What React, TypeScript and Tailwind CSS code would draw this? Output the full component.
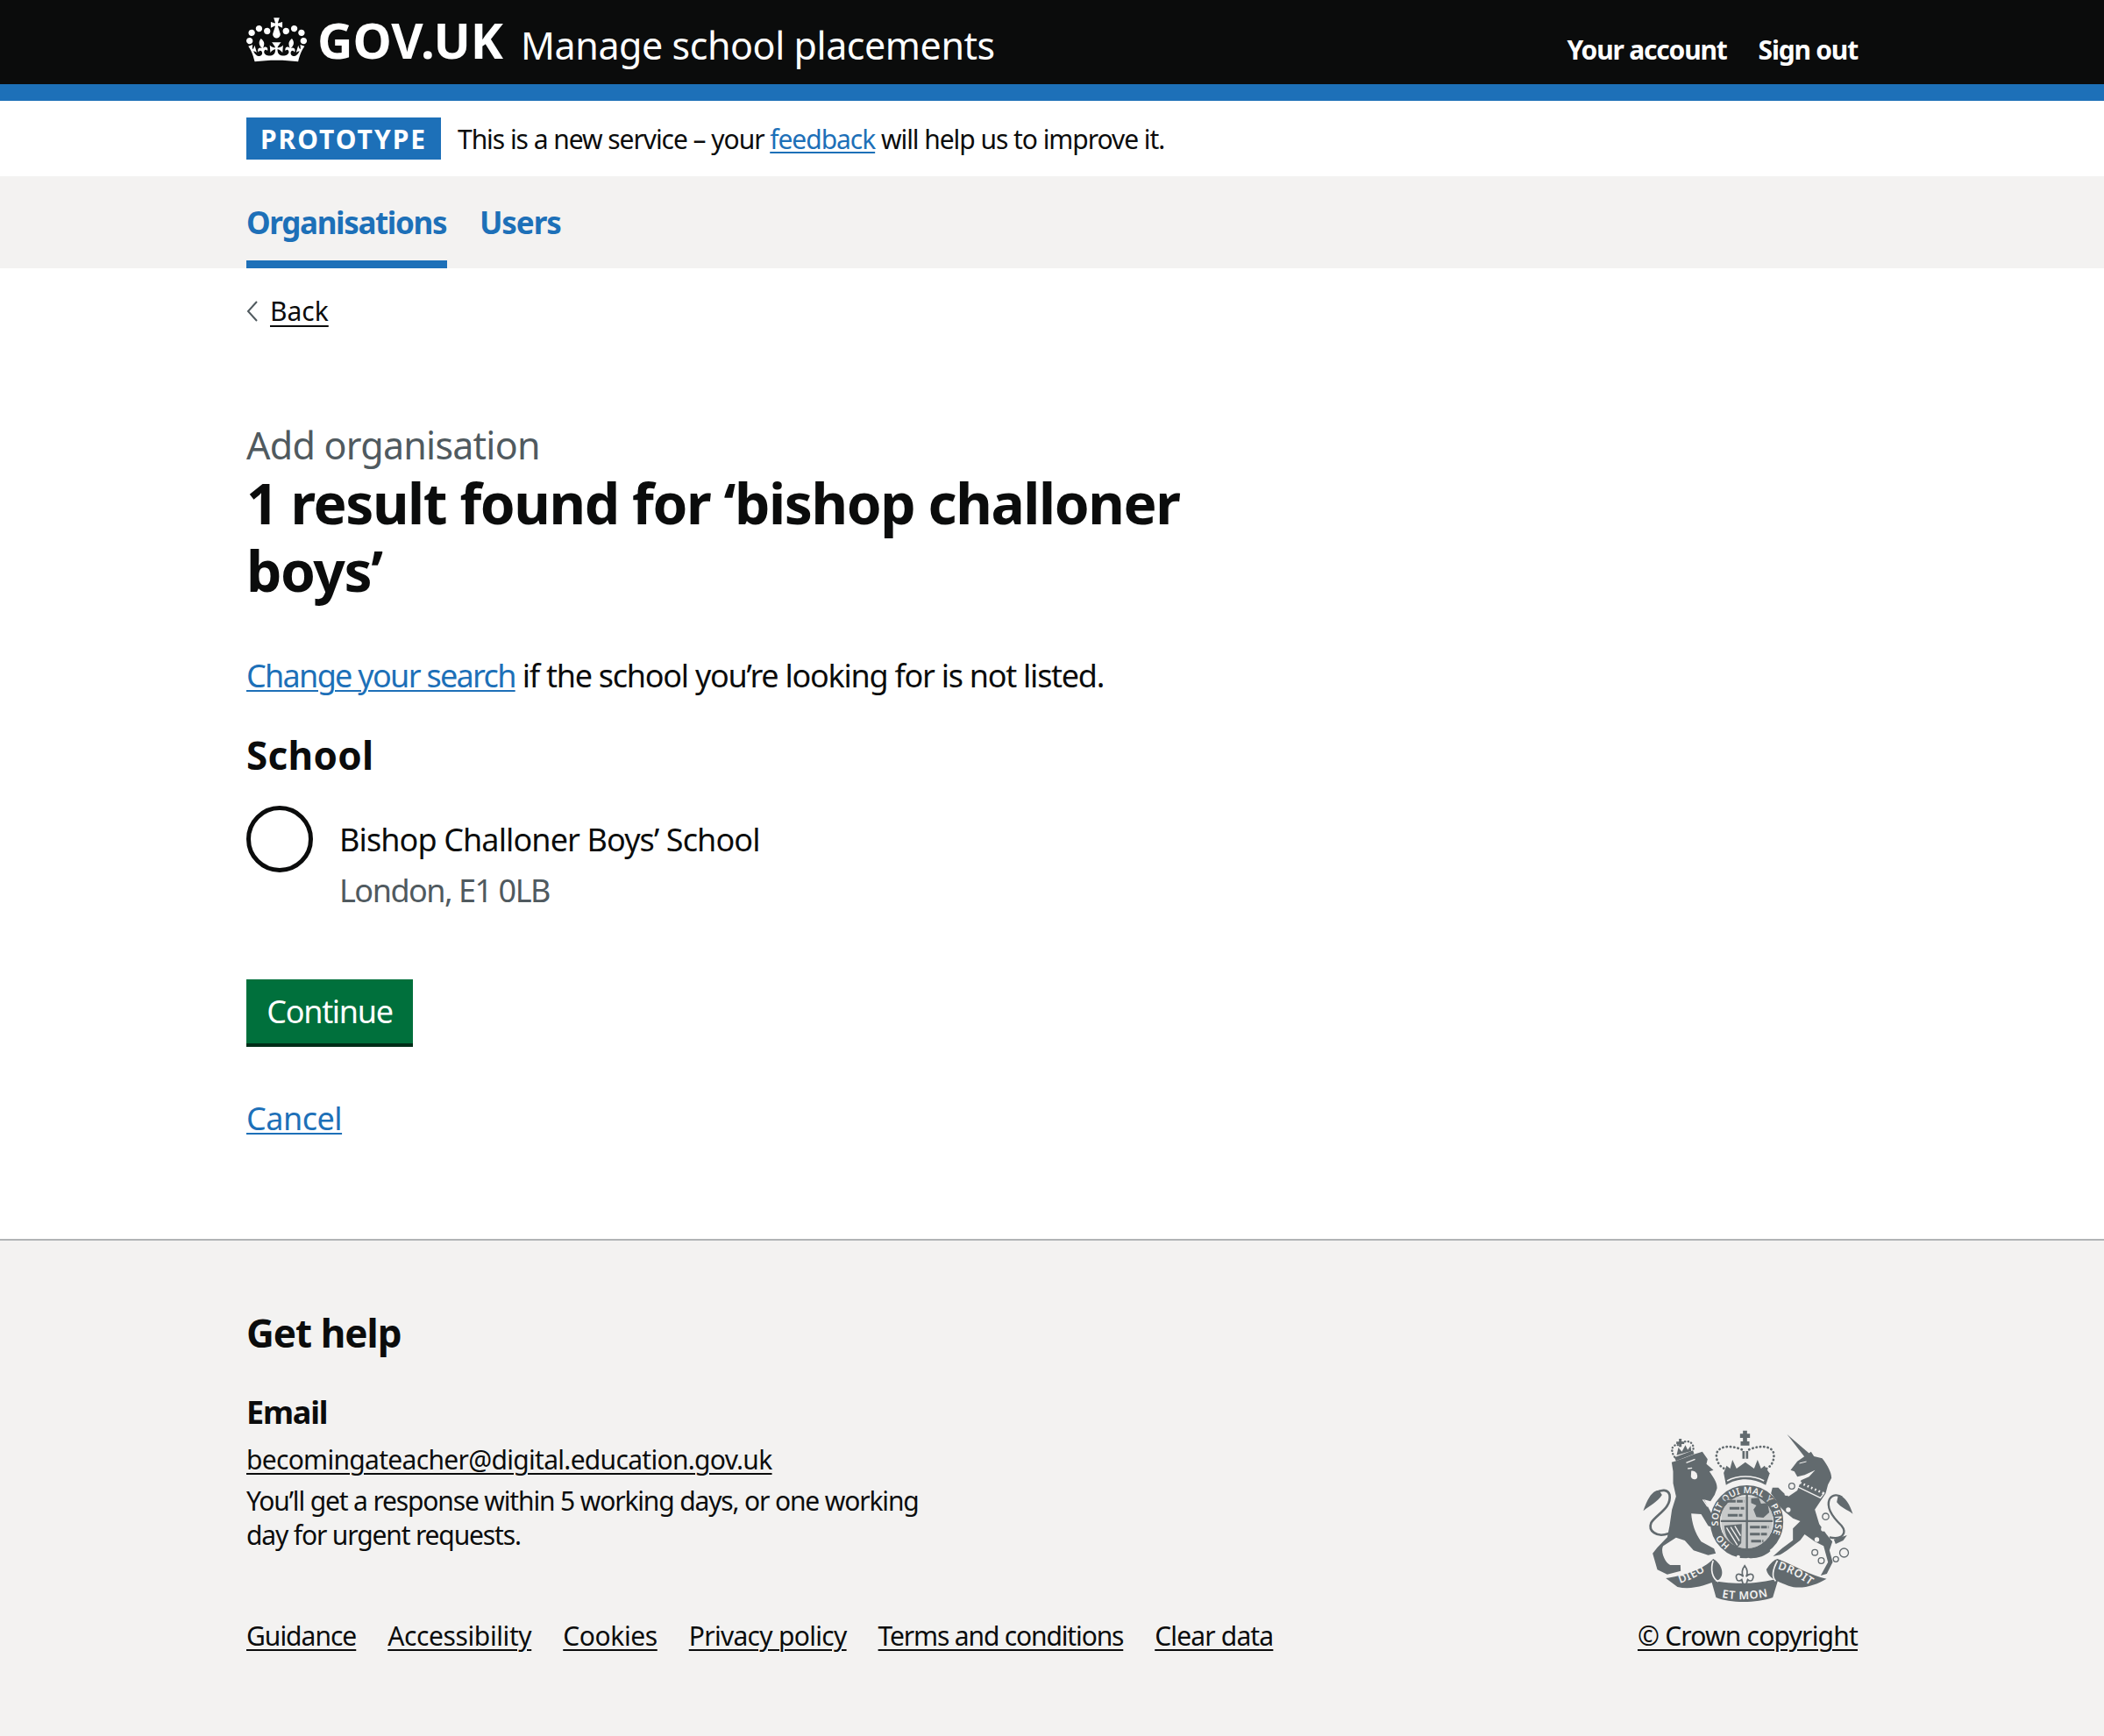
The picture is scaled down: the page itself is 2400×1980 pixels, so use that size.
const font = { fontFamily: '"Noto Sans", sans-serif' };

const crownPath =
  "M25 30.2c3.5 1.5 7.7-.2 9.1-3.7 1.5-3.6-.2-7.8-3.9-9.2-3.6-1.4-7.6.3-9.1 3.9-1.4 3.5.3 7.5 3.9 9zM9 39.5c3.6 1.5 7.8-.2 9.2-3.7 1.5-3.6-.2-7.8-3.9-9.1-3.6-1.5-7.6.2-9.1 3.8-1.4 3.5.3 7.5 3.8 9zM4.4 57.2c3.5 1.5 7.7-.2 9.1-3.8 1.5-3.6-.2-7.7-3.9-9.1-3.5-1.5-7.6.3-9.1 3.8-1.4 3.5.3 7.6 3.9 9.1zm38.3-21.4c3.5 1.5 7.7-.2 9.1-3.8 1.5-3.6-.2-7.7-3.9-9.1-3.6-1.5-7.6.3-9.1 3.8-1.3 3.6.4 7.7 3.9 9.1zm64.4-5.6c-3.6 1.5-7.8-.2-9.1-3.7-1.5-3.6.2-7.8 3.8-9.2 3.6-1.4 7.7.3 9.2 3.9 1.3 3.5-.4 7.5-3.9 9zm15.9 9.3c-3.6 1.5-7.7-.2-9.1-3.7-1.5-3.6.2-7.8 3.7-9.1 3.6-1.5 7.7.2 9.2 3.8 1.5 3.5-.3 7.5-3.8 9zm4.7 17.7c-3.6 1.5-7.8-.2-9.2-3.8-1.5-3.6.2-7.7 3.9-9.1 3.6-1.5 7.7.3 9.2 3.8 1.3 3.5-.4 7.6-3.9 9.1zM89.3 35.8c-3.6 1.5-7.8-.2-9.2-3.8-1.4-3.6.2-7.7 3.9-9.1 3.6-1.5 7.7.3 9.2 3.8 1.4 3.6-.3 7.7-3.9 9.1zM69.7 17.7l8.9 4.7V9.3l-8.9 2.8c-.2-.3-.5-.6-.9-.9L72.4 0H59.6l3.5 11.2c-.3.3-.6.5-.9.9l-8.8-2.8v13.1l8.8-4.7c.3.3.6.7.9.9l-5 15.4v.1c-.2.8-.4 1.6-.4 2.4 0 4.1 3.1 7.5 7 8.1h.2c.3 0 .7.1 1 .1.4 0 .7 0 1-.1h.2c4-.6 7.1-4.1 7.1-8.1 0-.8-.1-1.7-.4-2.4V34l-5.1-15.4c.4-.2.7-.6 1-.9zM66 92.8c16.9 0 32.8 1.1 47.1 3.2 4-16.9 8.9-26.7 14-33.5l-9.6-3.4c1 4.9 1.1 7.2 0 10.2-1.5-1.4-3-4.3-4.2-8.7L108.6 76c2.8-2 5-3.2 7.5-3.3-4.4 9.4-10 11.9-13.6 11.2-4.3-.8-6.3-4.6-5.6-7.9 1-4.7 5.7-5.9 8-.5 4.3-8.7-3-11.4-7.6-8.8 7.1-7.2 7.9-13.5 2.1-21.1-8 6.1-8.1 12.3-4.5 20.8-4.7-5.4-12.1-2.5-9.5 6.2 3.4-5.2 7.9-2 7.2 3.1-.6 4.3-6.4 7.8-13.5 7.2-10.3-.9-10.9-8-11.2-13.8 2.5-.5 7.1 1.8 11 7.3L80.2 60c-4.1 4.4-8 5.3-12.3 5.4 1.4-4.4 8-11.6 8-11.6H55.5s6.4 7.2 7.9 11.6c-4.2-.1-8-1-12.3-5.4l1.4 16.4c3.9-5.5 8.5-7.7 10.9-7.3-.3 5.8-.9 12.8-11.1 13.8-7.2.6-12.9-2.9-13.5-7.2-.7-5 3.8-8.3 7.1-3.1 2.7-8.7-4.6-11.6-9.4-6.2 3.7-8.5 3.6-14.7-4.6-20.8-5.8 7.6-5 13.9 2.2 21.1-4.7-2.6-11.9.1-7.7 8.8 2.3-5.5 7.1-4.2 8.1.5.7 3.3-1.3 7.1-5.7 7.9-3.5.7-9-1.8-13.5-11.2 2.5.1 4.7 1.3 7.5 3.3l-4.7-15.4c-1.2 4.4-2.7 7.2-4.3 8.7-1.1-3-.9-5.3 0-10.2l-9.5 3.4c5 6.9 9.9 16.7 14 33.5 14.8-2.1 30.8-3.2 47.7-3.2z";

const c = "#626a6e";
const bg = "#f3f2f1";

function Lion() {
  return (
    <g transform="translate(135 75)">
      <path
        fill={c}
        d="M125 128 C160 118 200 100 230 92 L248 118 L244 134 L268 155 L254 160 C268 180 282 200 280 218 L272 240 L258 262 L236 256 L275 330 L276 356 L250 346 L226 306 L192 304 C194 335 205 372 226 400 L270 424 L276 440 L250 446 L200 430 L170 396 L140 386 L96 415 C86 432 100 470 120 480 L155 480 L156 500 L110 512 L76 496 L60 440 L76 420 L110 385 L118 345 L126 290 L140 245 L130 200 L130 160 Z"
      />
      <path fill="none" stroke={c} strokeWidth="8" d="M115 372 C72 388 44 362 55 335 C75 305 125 285 118 240 C112 220 90 222 72 232" />
      <path fill={c} d="M82 224 C56 224 40 260 28 295 C50 276 76 265 92 240 Z" />
      {/* face */}
      <path fill={bg} d="M192 158 C208 156 216 172 212 182 C206 190 194 188 191 178 Z" />
      <path fill="none" stroke={bg} strokeWidth="4" d="M175 130 L205 118 M180 150 L195 148 M232 256 L248 280" />
      {/* crown */}
      <path fill={c} d="M134 112 L198 88 L202 100 L140 124 Z M150 48 h9 v10 h9 v8 h-9 v10 h-9 v-10 h-9 v-8 h9 Z" />
      <path
        fill="none"
        stroke={c}
        strokeWidth="7"
        strokeDasharray="1 10"
        strokeLinecap="round"
        d="M135 110 C118 85 128 65 150 70 M160 62 C180 50 205 60 198 90"
      />
      <path fill={c} d="M142 104 L148 78 L160 92 L172 70 L180 86 L190 72 L192 90 Z" />
    </g>
  );
}

function Unicorn() {
  return (
    <g transform="translate(525 75)">
      <path fill={c} d="M130 33 L206 98 L190 110 Z" />
      <path
        fill={c}
        d="M190 108 L212 92 L222 108 L250 115 C270 140 282 165 282 182 L270 205 L262 235 L225 290 L240 340 L265 375 L285 400 L275 430 L286 470 L266 510 L245 516 L270 470 L255 415 L225 400 L190 375 L175 395 L130 430 L106 445 L82 450 L110 425 L150 395 L150 355 L175 330 L150 320 L125 300 L105 280 L90 255 L75 235 L80 215 L100 215 L120 235 L135 245 L165 225 L178 190 L205 178 L226 155 L190 172 L165 178 L155 160 L142 155 L165 125 Z"
      />
      <path fill="none" stroke={c} strokeWidth="7" d="M275 385 C320 395 336 370 316 345 C290 320 262 285 275 255 C285 238 305 238 318 248" />
      <path fill={c} d="M305 240 C330 245 345 275 355 305 C335 290 315 285 300 265 Z M290 392 L335 378 L322 396 L296 408 Z" />
      {/* collar */}
      <path fill="none" stroke={bg} strokeWidth="4" d="M165 212 L244 250 L258 232" />
      <path fill="none" stroke={bg} strokeWidth="8" strokeDasharray="5 9" d="M174 198 L258 236" />
      <path fill="none" stroke={bg} strokeWidth="3" d="M172 132 L196 126" />
      <g fill={bg}>
        <circle cx="254" cy="357" r="8" />
        <circle cx="232" cy="393" r="8" />
        <circle cx="127" cy="237" r="6" />
        <circle cx="134" cy="291" r="8" />
      </g>
      <g fill={bg} stroke={c} strokeWidth="4">
        <circle cx="146" cy="210" r="10" />
        <circle cx="262" cy="314" r="11" />
      </g>
      <g fill="none" stroke={c} strokeWidth="4">
        <circle cx="225" cy="437" r="10" />
        <circle cx="247" cy="465" r="10" />
        <circle cx="297" cy="460" r="9" />
        <circle cx="325" cy="438" r="15" />
      </g>
    </g>
  );
}

function Arms() {
  return (
    <g transform="translate(360 75)">
      {/* crown */}
      <path fill={c} d="M144 20 h14 v11 h10 v14 h-10 v12 h8 v14 h-30 v-14 h8 v-12 h-10 v-14 h10 Z M142 90 h8 v26 h-8 Z M154 90 h8 v26 h-8 Z" />
      <path
        fill="none"
        stroke={c}
        strokeWidth="8"
        strokeDasharray="1 12"
        strokeLinecap="round"
        d="M140 85 C100 68 55 72 53 105 C54 130 68 145 80 150 M165 85 C205 68 250 72 250 105 C250 130 236 145 225 150"
      />
      <path
        fill={c}
        d="M78 165 L88 140 L100 150 L108 120 L122 150 L152 128 L182 150 L194 120 L206 150 L218 140 L234 165 Z"
      />
      <path fill={c} d="M78 165 C120 155 184 155 236 165 L222 206 C180 180 124 180 86 206 Z" />
      <path fill="none" stroke={bg} strokeWidth="5" d="M90 192 C125 172 180 172 216 192" />

      {/* garter */}
      <circle cx="157" cy="332" r="108" fill="none" stroke={c} strokeWidth="34" />
      <circle cx="157" cy="332" r="91" fill={bg} />
      <defs>
        <path id="garter" d="M100 412 A98 98 0 1 1 214 412" />
      </defs>
      <text fill={bg} fontSize="31" fontWeight="600" letterSpacing="1" style={font}>
        <textPath href="#garter">
          HO<tspan dx="30">SOIT QUI MAL Y PENSE</tspan>
        </textPath>
      </text>

      {/* shield */}
      <path fill={c} opacity="0.3" d="M70 245 H245 V340 C245 390 200 425 157 432 C115 425 70 390 70 340 Z" />
      <path fill={c} d="M154 240 h7 v190 h-7 Z M68 326 h178 v7 h-178 Z" />
      <g fill="none" stroke={c} strokeWidth="9" strokeDasharray="34 4 20 4">
        <path d="M85 262 H148 M98 286 H148 M92 310 H142" />
        <path d="M168 350 H232 M168 374 H226 M172 398 H214" />
      </g>
      <path fill={c} d="M172 252 L198 250 L206 270 L228 268 L234 300 L214 318 L190 316 L180 290 L190 276 L172 268 Z" />
      <path fill={c} d="M80 345 L140 340 L138 405 L125 420 C100 405 82 385 80 345 Z" />
      <path fill="none" stroke={bg} strokeWidth="4" d="M88 352 L125 412 M102 350 L132 398 M116 346 L136 380" />

      {/* buckle */}
      <path fill={c} d="M92 420 C120 462 200 470 238 432 L222 414 C200 438 130 438 108 410 Z" />
      <circle cx="128" cy="452" r="6" fill={bg} />
      <circle cx="162" cy="461" r="6" fill={bg} />

      {/* fleur */}
      <path
        fill={bg}
        stroke={c}
        strokeWidth="5"
        d="M150 482 C162 498 160 510 155 520 C168 504 184 512 178 526 C176 536 166 536 160 530 L156 544 L150 556 L144 544 L140 530 C134 536 124 536 122 526 C116 512 132 504 145 520 C140 510 138 498 150 482 Z"
      />
    </g>
  );
}

function Crest() {
  return (
    <svg viewBox="150 90 740 600" className="w-[247px] h-[200px]" aria-hidden="true">
      <defs>
        <path id="dieu" d="M288 618 C330 605 365 585 392 562" />
        <path id="etmon" d="M432 666 C480 675 540 675 598 660" />
        <path id="droit" d="M622 568 C660 578 700 600 738 628" />
      </defs>
      <Lion />
      <Unicorn />
      <Arms />
      {/* motto ribbon */}
      <path fill={c} d="M240 600 C300 592 370 570 402 534 C432 550 444 590 420 606 C380 622 330 642 280 630 Z" />
      <path fill={c} d="M395 606 C450 622 560 622 626 600 L606 666 C550 686 460 686 412 666 Z" />
      <path fill={c} d="M584 570 C598 548 612 536 622 534 C680 556 730 590 790 602 C750 626 700 640 660 626 C620 610 590 600 584 570 Z" />
      <path fill="none" stroke={bg} strokeWidth="5" d="M402 540 C392 570 398 600 420 612 M622 540 C606 570 602 596 616 610" />
      <g fill={bg} fontSize="38" fontWeight="600" letterSpacing="2" style={font}>
        <text><textPath href="#dieu">DIEU</textPath></text>
        <text><textPath href="#etmon">ET MON</textPath></text>
        <text><textPath href="#droit">DROIT</textPath></text>
      </g>
    </svg>
  );
}

function BlueLink({ children, className }: { children: React.ReactNode; className?: string }) {
  return <a href="#" className={`text-[#1d70b8] underline decoration-[2px] underline-offset-[3px] ${className ?? ""}`}>{children}</a>;
}

function FooterLink({ children, className }: { children: React.ReactNode; className?: string }) {
  return <a href="#" className={`text-[#0b0c0c] underline decoration-[2px] underline-offset-[4px] ${className ?? ""}`}>{children}</a>;
}

export default function App() {
  return (
    <div style={font} className="min-h-[1980px] flex flex-col bg-white text-[#0b0c0c]">
      {/* Header */}
      <header className="bg-[#0b0c0c] border-b-[19px] border-[#1d70b8] text-white">
        <div className="w-[1838px] mx-auto h-[96px] flex items-start justify-between">
          <div className="flex items-start pt-[14px]">
            <svg viewBox="0 0 132 97" className="w-[69px] h-[51px] mt-[6px]" fill="currentColor" aria-hidden="true">
              <path d={crownPath} />
            </svg>
            <span className="ml-[12px] mt-[3px] text-[56px] leading-[56px] font-bold">GOV.UK</span>
            <span className="ml-[20px] mt-[10px] text-[43px] leading-[56px] tracking-[-0.45px]">Manage school placements</span>
          </div>
          <nav className="flex gap-[36px] pt-[37px] text-[30px] leading-[40px] font-bold tracking-[-1.2px]">
            <a href="#">Your account</a>
            <a href="#">Sign out</a>
          </nav>
        </div>
      </header>

      {/* Phase banner */}
      <div className="w-[1838px] mx-auto h-[86px] flex items-center text-[30px]">
        <strong className="h-[48px] w-[222px] flex items-center justify-center bg-[#1d70b8] text-white font-bold tracking-[2px]">
          PROTOTYPE
        </strong>
        <span className="ml-[19px] tracking-[-1.05px]">
          This is a new service – your <BlueLink>feedback</BlueLink> will help us to improve it.
        </span>
      </div>

      {/* Nav */}
      <div className="bg-[#f3f2f1] h-[105px]">
        <div className="w-[1838px] mx-auto h-full flex gap-[37px] text-[35px] font-bold text-[#1d70b8] tracking-[-1.35px]">
          <a href="#" className="h-full w-[229px] pt-[27px] border-b-[9px] border-[#1d70b8] whitespace-nowrap">Organisations</a>
          <a href="#" className="h-full pt-[27px] tracking-[-1.1px]">Users</a>
        </div>
      </div>

      {/* Main */}
      <main className="w-[1838px] mx-auto flex-1">
        <a href="#" className="mt-[27px] flex items-center text-[30px] leading-[44px] text-[#0b0c0c]">
          <svg viewBox="0 0 14 24" className="w-[14px] h-[24px] mr-[13px]" fill="none" stroke="#505a5f" strokeWidth="2">
            <path d="M12 1 L2 12 L12 23" />
          </svg>
          <span className="underline decoration-[2px] underline-offset-[5px]">Back</span>
        </a>

        <div className="mt-[106px] text-[43px] leading-[50px] text-[#505a5f] tracking-[-0.77px]">Add organisation</div>
        <h1 className="mt-[2px] w-[1200px] text-[64px] leading-[77px] font-bold tracking-[-1.4px]">
          1 result found for ‘bishop challoner boys’
        </h1>

        <p className="mt-[57px] text-[36px] leading-[50px] tracking-[-1.27px]">
          <BlueLink className="tracking-[-1.7px]">Change your search</BlueLink> if the school you’re looking for is not listed.
        </p>

        <h2 className="mt-[38px] text-[44px] leading-[54px] font-bold tracking-[0.3px]">School</h2>

        <div className="mt-[31px] flex items-start">
          <span className="w-[76px] h-[76px] rounded-full border-[5px] border-[#0b0c0c] shrink-0" />
          <div className="ml-[30px] pt-[14px]">
            <div className="text-[36px] leading-[50px] tracking-[-0.9px]">Bishop Challoner Boys’ School</div>
            <div className="mt-[8px] text-[36px] leading-[50px] text-[#505a5f] tracking-[-1.5px]">London, E1 0LB</div>
          </div>
        </div>

        <button className="mt-[76px] block w-[190px] h-[77px] bg-[#00703c] border-b-[4px] border-[#002d18] text-white text-[36px] tracking-[-1.3px]">
          Continue
        </button>

        <div className="mt-[57px] text-[36px] leading-[50px] tracking-[-0.5px]">
          <BlueLink>Cancel</BlueLink>
        </div>
      </main>

      {/* Footer */}
      <footer className="bg-[#f3f2f1] border-t-[2px] border-[#b1b4b6] h-[567px]">
        <div className="w-[1838px] mx-auto flex items-end justify-between pt-[75px]">
          <div>
            <h2 className="text-[44px] leading-[60px] font-bold tracking-[-1px]">Get help</h2>
            <h3 className="mt-[36px] text-[36px] leading-[50px] font-bold tracking-[-1.2px]">Email</h3>
            <div className="mt-[10px] text-[30px] leading-[38px] tracking-[-0.7px]">
              <FooterLink>becomingateacher@digital.education.gov.uk</FooterLink>
            </div>
            <p className="mt-[8px] w-[800px] text-[30px] leading-[39px] tracking-[-1.15px]">
              You’ll get a response within 5 working days, or one working day for urgent requests.
            </p>
            <div className="mt-[76px] flex gap-[36px] text-[30px] leading-[40px]">
              <FooterLink className="tracking-[-1px]">Guidance</FooterLink>
              <FooterLink className="tracking-[-0.4px]">Accessibility</FooterLink>
              <FooterLink className="tracking-[-0.4px]">Cookies</FooterLink>
              <FooterLink className="tracking-[-0.7px]">Privacy policy</FooterLink>
              <FooterLink className="tracking-[-1.15px]">Terms and conditions</FooterLink>
              <FooterLink className="tracking-[-0.85px]">Clear data</FooterLink>
            </div>
          </div>
          <div className="flex flex-col items-center">
            <Crest />
            <div className="mt-[16px] text-[30px] leading-[40px] tracking-[-0.8px]">
              <FooterLink>© Crown copyright</FooterLink>
            </div>
          </div>
        </div>
      </footer>
    </div>
  );
}
